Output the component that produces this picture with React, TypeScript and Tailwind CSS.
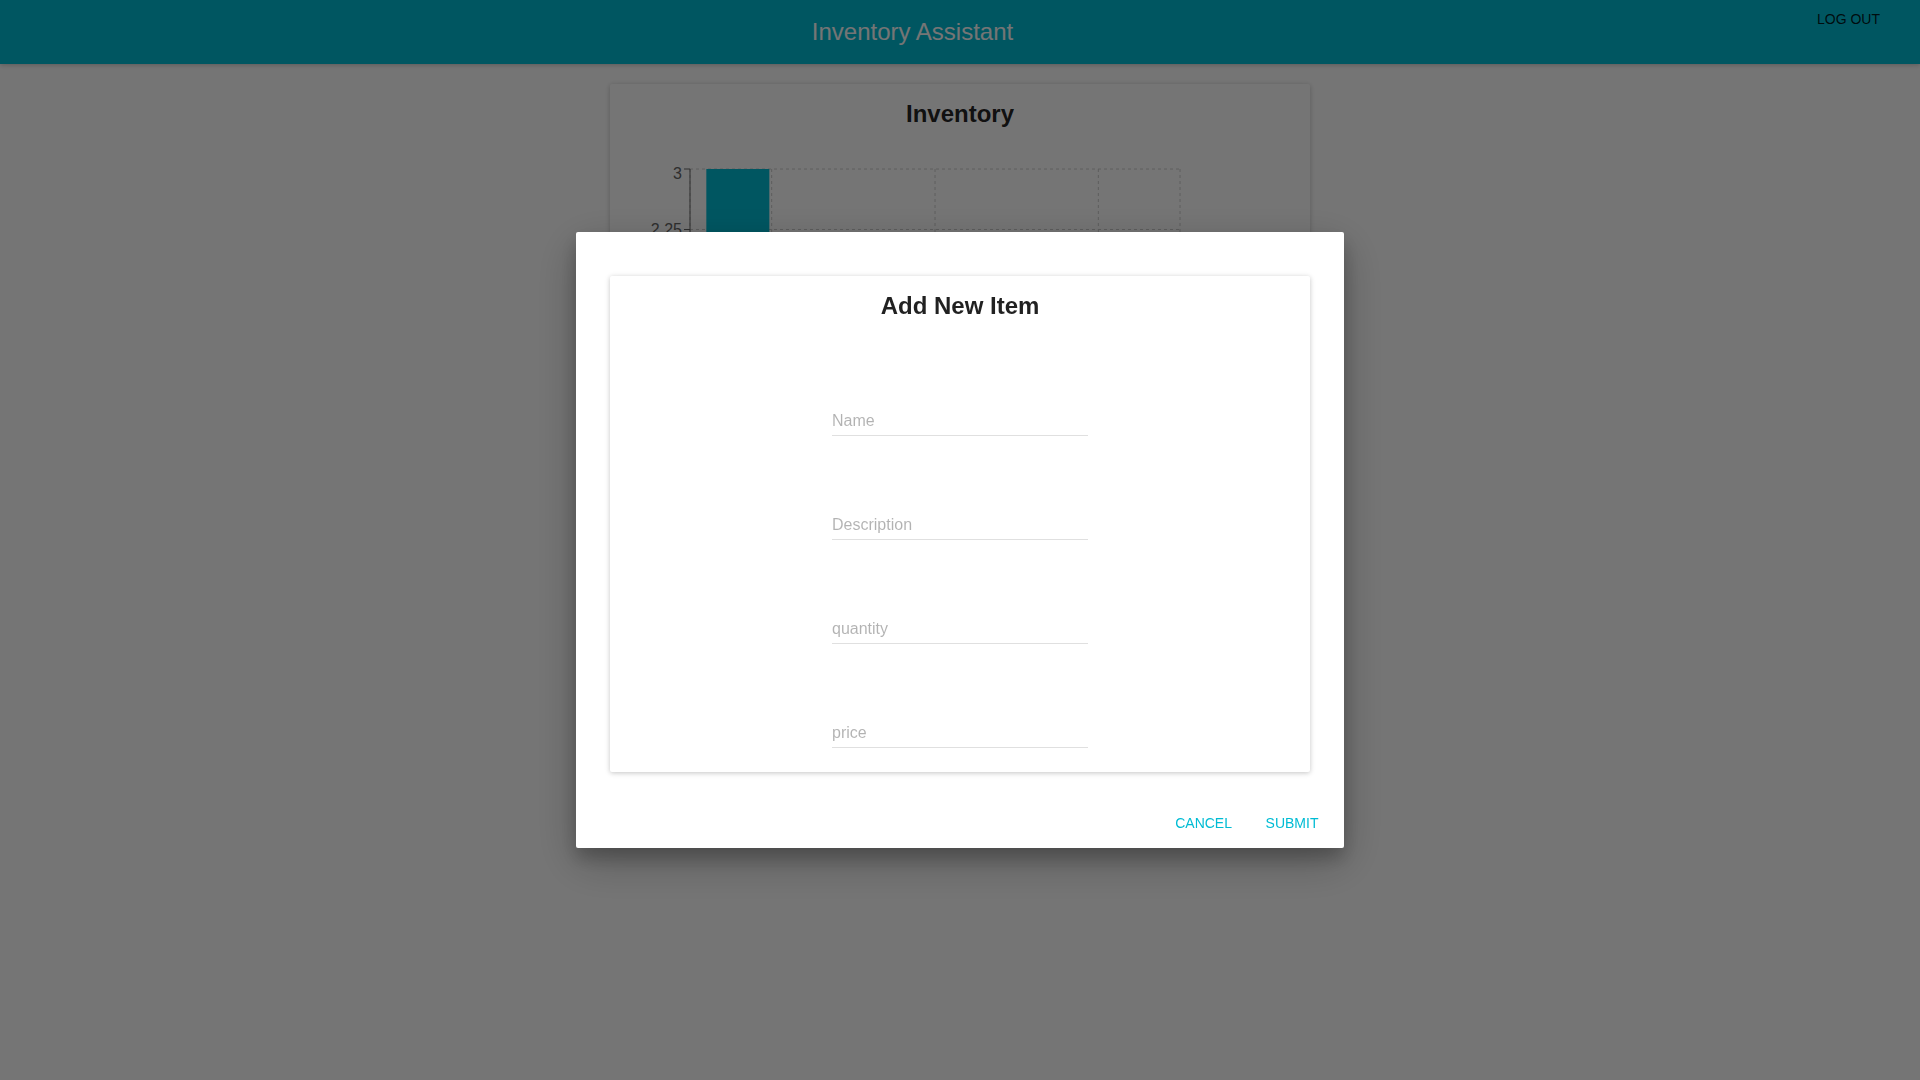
import React from "react";

const CARD =
  "mx-auto w-full max-w-[700px] rounded-xs bg-white pt-4 text-center shadow-[0_1px_6px_rgba(0,0,0,0.12),0_1px_4px_rgba(0,0,0,0.12)]";

const fields = [
  { id: "name", label: "Name" },
  { id: "description", label: "Description" },
  { id: "quantity", label: "quantity" },
  { id: "price", label: "price" },
];

const inventory = [3, 2, 1];

const PLOT = { left: 60, top: 25, width: 490, height: 242, max: 3 };

function InventoryChart() {
  const { left, top, width, height, max } = PLOT;
  const band = width / inventory.length;
  const ticks = [0, 1, 2, 3, 4].map((i) => ({
    value: (max * i) / 4,
    y: top + height - (height * i) / 4,
    labelShift: i === 4 ? 10 : 5,
  }));
  const columns = [left, ...inventory.map((_, i) => left + band * (i + 0.5)), left + width];

  return (
    <svg width="580" height="300" role="img" aria-label="Inventory quantities" className="block">
      <g stroke="#ccc" strokeDasharray="3 3">
        {ticks.map((t) => (
          <line key={t.value} x1={left} x2={left + width} y1={t.y} y2={t.y} />
        ))}
        {columns.map((x) => (
          <line key={x} x1={x} x2={x} y1={top} y2={top + height} />
        ))}
      </g>
      <g stroke="#666">
        <line x1={left} x2={left} y1={top} y2={top + height} />
        <line x1={left} x2={left + width} y1={top + height} y2={top + height} />
        {ticks.map((t) => (
          <line key={t.value} x1={left - 6} x2={left} y1={t.y} y2={t.y} />
        ))}
      </g>
      <g fill="#666" fontSize="16" textAnchor="end">
        {ticks.map((t) => (
          <text key={t.value} x={left - 8} y={t.y + t.labelShift}>
            {t.value}
          </text>
        ))}
      </g>
      <g fill="#00bcd4">
        {inventory.map((count, i) => {
          const h = (height * count) / max;
          return (
            <rect key={i} x={left + band * (i + 0.1)} y={top + height - h} width={63} height={h} />
          );
        })}
      </g>
    </svg>
  );
}

export default function App() {
  return (
    <div className="min-h-screen bg-white font-['Liberation_Sans',Arial,sans-serif] text-black/87">
      <header className="flex h-16 items-start bg-[#00bcd4] px-6 shadow-[0_1px_6px_rgba(0,0,0,0.12),0_1px_4px_rgba(0,0,0,0.12)]">
        <h1 className="flex-1 text-center text-2xl leading-16 text-white">Inventory Assistant</h1>
        <button type="button" className="mt-px h-9 min-w-22 px-4 text-sm">
          LOG OUT
        </button>
      </header>

      <main className="px-6 pt-5">
        <section className={CARD}>
          <h2 className="text-2xl leading-7 font-bold">Inventory</h2>
          <div className="px-5 pt-4 pb-6">
            <InventoryChart />
          </div>
        </section>
      </main>

      <div className="fixed inset-0 flex items-center justify-center bg-black/54">
        <div
          role="dialog"
          aria-modal="true"
          aria-labelledby="dialog-title"
          className="w-3/4 max-w-3xl rounded-xs bg-white shadow-[0_14px_45px_rgba(0,0,0,0.25),0_10px_18px_rgba(0,0,0,0.22)]"
        >
          <form>
            <div className="px-6 pt-11 pb-6">
              <div className={CARD}>
                <h2 id="dialog-title" className="text-2xl leading-7 font-bold">
                  Add New Item
                </h2>
                <div className="flex flex-col items-center gap-18 pt-21 pb-6">
                  {fields.map((f) => (
                    <input
                      key={f.id}
                      id={f.id}
                      name={f.id}
                      type="text"
                      aria-label={f.label}
                      placeholder={f.label}
                      className="h-8 w-64 border-b border-[#e0e0e0] bg-transparent pt-0.5 text-base outline-none placeholder:text-black/30"
                    />
                  ))}
                </div>
              </div>
            </div>
            <div className="flex justify-end p-2 text-sm text-[#00bcd4]">
              <button type="button" className="h-9 min-w-22 px-4 pt-0.5">
                CANCEL
              </button>
              <button type="button" className="h-9 min-w-22 px-4 pt-0.5">
                SUBMIT
              </button>
            </div>
          </form>
        </div>
      </div>
    </div>
  );
}
